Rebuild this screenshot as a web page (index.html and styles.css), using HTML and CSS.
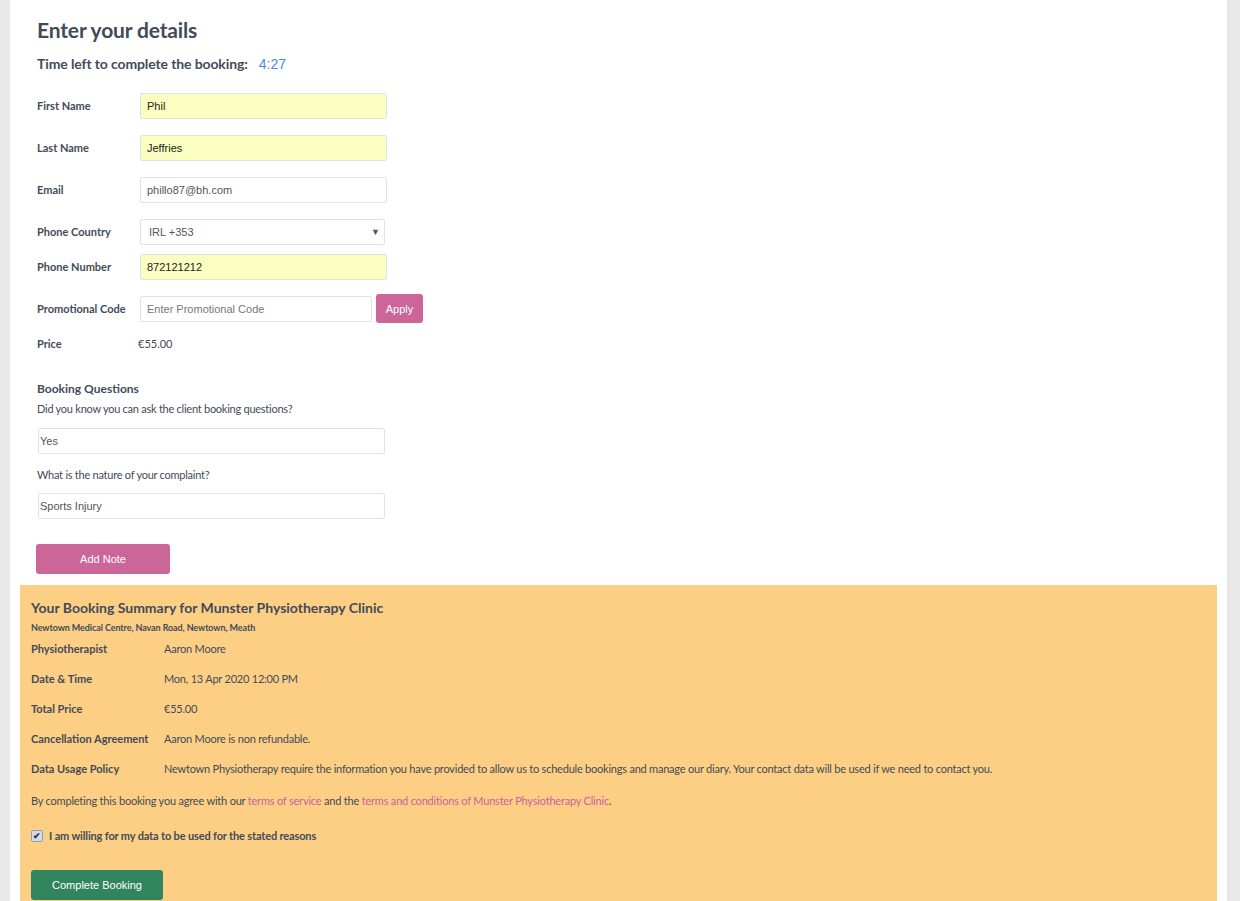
FILE: index.html
```html
<!DOCTYPE html>
<html lang="en">
<head>
    <meta charset="UTF-8">
    <meta name="viewport" content="width=device-width, initial-scale=1.0">
    <title>Enter your details</title>
    <link rel="stylesheet" href="styles.css">
</head>
<body>
    <div class="page">
        <div class="details">
            <h1>Enter your details</h1>
            <div class="time-left">Time left to complete the booking: <span class="timer">4:27</span></div>

            <div class="form-row">
                <label for="firstName">First Name</label>
                <input type="text" id="firstName" class="input-box filled" value="Phil">
            </div>
            <div class="form-row">
                <label for="lastName">Last Name</label>
                <input type="text" id="lastName" class="input-box filled" value="Jeffries">
            </div>
            <div class="form-row">
                <label for="email">Email</label>
                <input type="text" id="email" class="input-box" value="phillo87@bh.com">
            </div>
            <div class="form-row country-row">
                <label for="country">Phone Country</label>
                <div class="select-wrap">
                    <select id="country" class="input-box select-box">
                        <option>IRL +353</option>
                    </select>
                </div>
            </div>
            <div class="form-row">
                <label for="phone">Phone Number</label>
                <input type="text" id="phone" class="input-box filled" value="872121212">
            </div>
            <div class="form-row promo-row">
                <label for="promo">Promotional Code</label>
                <div class="promo-group">
                    <input type="text" id="promo" class="input-box promo-box" placeholder="Enter Promotional Code">
                    <button class="apply-button">Apply</button>
                </div>
            </div>
            <div class="form-row price-row">
                <label>Price</label>
                <span class="price">€55.00</span>
            </div>

            <div class="questions">
                <h2>Booking Questions</h2>
                <p class="question">Did you know you can ask the client booking questions?</p>
                <input type="text" class="input-box answer" value="Yes">
                <p class="question">What is the nature of your complaint?</p>
                <input type="text" class="input-box answer" value="Sports Injury">
                <button class="note-button">Add Note</button>
            </div>
        </div>

        <div class="summary">
            <h3>Your Booking Summary for Munster Physiotherapy Clinic</h3>
            <div class="address">Newtown Medical Centre, Navan Road, Newtown, Meath</div>
            <div class="summary-row"><span class="summary-label">Physiotherapist</span><span>Aaron Moore</span></div>
            <div class="summary-row"><span class="summary-label">Date &amp; Time</span><span>Mon, 13 Apr 2020 12:00 PM</span></div>
            <div class="summary-row"><span class="summary-label">Total Price</span><span>€55.00</span></div>
            <div class="summary-row"><span class="summary-label">Cancellation Agreement</span><span>Aaron Moore is non refundable.</span></div>
            <div class="summary-row"><span class="summary-label">Data Usage Policy</span><span>Newtown Physiotherapy require the information you have provided to allow us to schedule bookings and manage our diary. Your contact data will be used if we need to contact you.</span></div>
            <p class="terms">By completing this booking you agree with our <a href="#">terms of service</a> and the <a href="#">terms and conditions of Munster Physiotherapy Clinic</a>.</p>
            <label class="consent"><span class="check">&#10004;</span> I am willing for my data to be used for the stated reasons</label>
            <button class="complete-button">Complete Booking</button>
        </div>
    </div>
</body>
</html>
```

FILE: styles.css
```css
body {
    margin: 0;
    background-color: #e8e8e8;
    font-family: Lato, "Open Sans", sans-serif;
    color: #424b59;
}
.page {
    margin-left: 10px;
    width: 1197px;
    min-height: 901px;
    padding: 0 10px;
    background-color: #fff;
}
.details {
    padding: 17px 0 11px 17px;
}
h1 {
    margin: 0;
    font-size: 21px;
    line-height: 26px;
    font-weight: 700;
    letter-spacing: -0.15px;
}
.time-left {
    display: flex;
    align-items: baseline;
    margin-top: 12px;
    font-size: 14px;
    line-height: 18px;
    font-weight: 700;
    letter-spacing: -0.12px;
}
.timer {
    margin-left: 11px;
    font-family: "Liberation Sans", Arial, sans-serif;
    font-weight: 400;
    letter-spacing: 0;
    color: #4d86e6;
}
.form-row {
    display: grid;
    grid-template-columns: 103px auto;
    align-items: center;
    margin-bottom: 16px;
}
.time-left + .form-row {
    margin-top: 20px;
}
.form-row label {
    margin-top: -1px;
    font-size: 11px;
    font-weight: 700;
}
.input-box {
    box-sizing: border-box;
    width: 247px;
    height: 26px;
    margin: 0;
    padding: 0 6px;
    border: 1px solid #e2e2e2;
    border-radius: 2px;
    background-color: #fff;
    font-family: "Liberation Sans", Arial, sans-serif;
    font-size: 11px;
    color: #555;
}
.input-box.filled {
    background-color: #fafec0;
    color: #222;
}
.input-box::placeholder {
    color: #777;
}
.country-row {
    margin-bottom: 9px;
}
.select-wrap {
    position: relative;
    width: 245px;
}
.select-box {
    width: 245px;
    padding-left: 8px;
    appearance: none;
    -webkit-appearance: none;
}
.select-wrap:after {
    content: "\25BC";
    position: absolute;
    right: 5px;
    top: 7px;
    font-size: 9px;
    color: #555;
    pointer-events: none;
}
.promo-row {
    margin-top: -2px;
    margin-bottom: 13px;
}
.promo-group {
    display: flex;
    align-items: center;
    gap: 4px;
}
.promo-box {
    width: 232px;
}
.apply-button, .note-button, .complete-button {
    border: none;
    border-radius: 3px;
    color: #fff;
    font-family: "Liberation Sans", Arial, sans-serif;
    font-size: 11px;
    cursor: pointer;
}
.apply-button, .note-button {
    background-color: #cc6699;
}
.apply-button {
    width: 47px;
    height: 29px;
    padding: 0;
}
.price-row {
    line-height: 16px;
}
.price {
    margin-left: -2px;
    font-size: 11px;
}
.questions {
    margin-top: 29px;
}
h2 {
    margin: 0;
    font-size: 12px;
    line-height: 16px;
    font-weight: 700;
}
.question {
    margin: 4px 0 11px;
    font-size: 11px;
    line-height: 16px;
    letter-spacing: -0.25px;
}
.answer {
    width: 347px;
    height: 26px;
    margin-left: 1px;
    padding: 0 1px;
    display: block;
}
.answer + .question {
    margin-top: 13px;
    margin-bottom: 10px;
}
.note-button {
    display: block;
    width: 134px;
    height: 30px;
    margin: 25px 0 0 -1px;
}
.summary {
    padding: 14px 11px 1px;
    background-color: #fdcf85;
    font-size: 11px;
    letter-spacing: -0.22px;
}
h3 {
    margin: 0;
    font-size: 14px;
    line-height: 18px;
    font-weight: 700;
    letter-spacing: 0;
}
.address {
    margin-top: 5px;
    font-size: 9px;
    line-height: 12px;
    font-weight: 700;
    letter-spacing: -0.1px;
}
.summary-row {
    display: flex;
    line-height: 30px;
}
.summary-label {
    width: 133px;
    flex-shrink: 0;
    font-weight: 700;
    letter-spacing: 0;
}
.terms {
    margin: 9px 0 0;
    line-height: 16px;
    letter-spacing: -0.2px;
}
.terms a {
    color: #cc5fa3;
    text-decoration: none;
}
.consent {
    display: flex;
    align-items: center;
    gap: 6px;
    margin-top: 19px;
    line-height: 16px;
    font-weight: 700;
    letter-spacing: -0.15px;
}
.check {
    box-sizing: border-box;
    width: 12px;
    height: 12px;
    border: 1px solid #8c9dc6;
    border-radius: 2px;
    background-color: #d6dbe6;
    font-size: 9px;
    line-height: 10px;
    text-align: center;
    letter-spacing: 0;
    color: #333;
}
.complete-button {
    display: block;
    width: 132px;
    height: 30px;
    margin-top: 26px;
    background-color: #30845e;
    letter-spacing: 0;
}
```
